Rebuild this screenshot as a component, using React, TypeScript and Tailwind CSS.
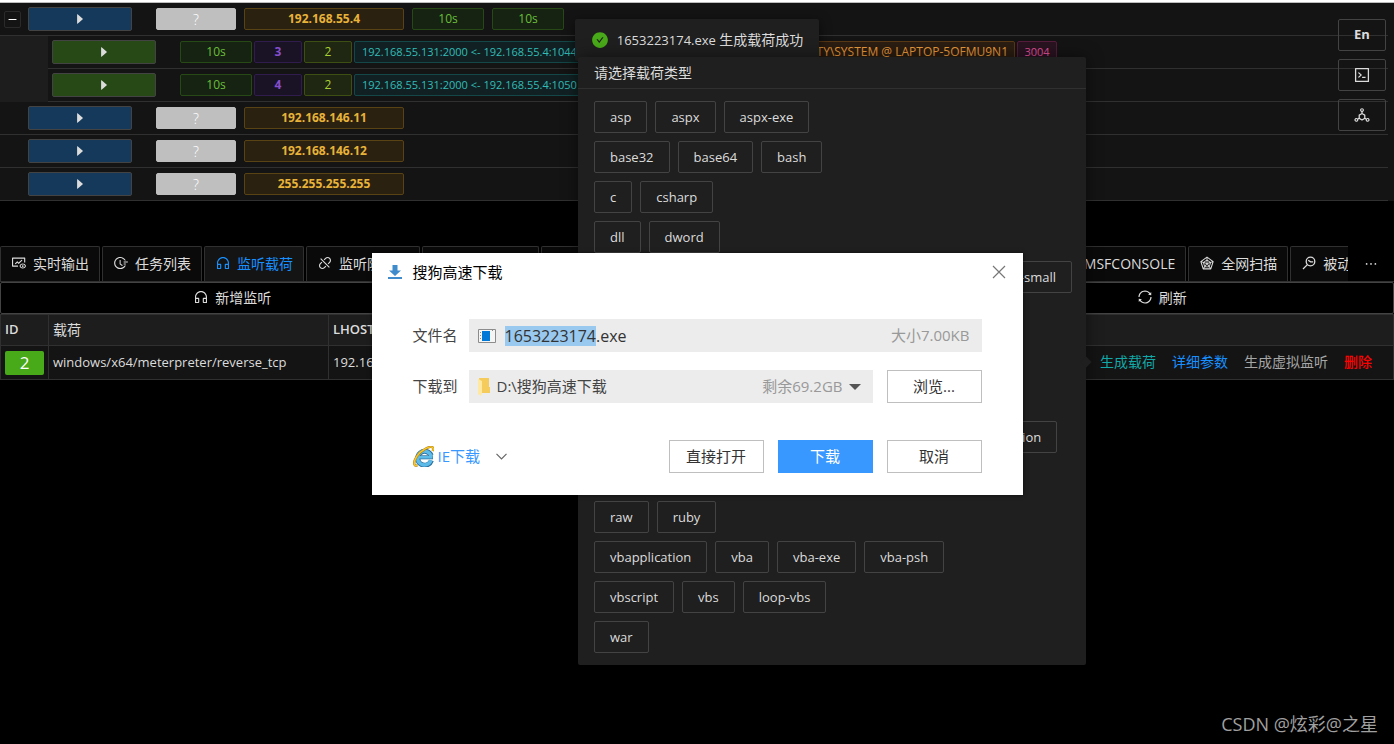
import React, { useEffect, useRef } from 'react'
import {
  AiFillCaretRight,
  AiFillCheckCircle,
  AiOutlineCode,
  AiOutlineCustomerService,
  AiOutlineDeploymentUnit,
  AiOutlineDisconnect,
  AiOutlineEllipsis,
  AiOutlineFieldTime,
  AiOutlineFundView,
  AiOutlineMinus,
  AiOutlineRadarChart,
  AiOutlineSync,
} from 'react-icons/ai'

const hosts = ['192.168.146.11', '192.168.146.12', '255.255.255.255']

const sessions = [
  { id: 3, link: '192.168.55.131:2000 <- 192.168.55.4:1044', user: 'NT AUTHORITY\\SYSTEM @ LAPTOP-5OFMU9N1', pid: '3004' },
  { id: 4, link: '192.168.55.131:2000 <- 192.168.55.4:1050', user: '', pid: '' },
]

const formats = [
  ['asp', 'aspx', 'aspx-exe'],
  ['base32', 'base64', 'bash'],
  ['c', 'csharp'],
  ['dll', 'dword'],
  ['elf', 'elf-so', 'exe', 'exe-only', 'exe-service', 'exe-small'],
  ['hex', 'hta-psh'],
  ['jar', 'java', 'jsp', 'js_be', 'js_le'],
  ['macho', 'msi', 'msi-nouac'],
  ['powershell', 'psh', 'psh-cmd', 'psh-net', 'psh-reflection'],
  ['python', 'perl'],
  ['raw', 'ruby'],
  ['vbapplication', 'vba', 'vba-exe', 'vba-psh'],
  ['vbscript', 'vbs', 'loop-vbs'],
  ['war'],
]

function ScanIcon() {
  return (
    <svg width="16" height="16" viewBox="0 0 16 16" fill="none" stroke="currentColor" strokeWidth="1.3">
      <circle cx="9.500" cy="6.500" r="4.300" />
      <path d="M6.400 9.600L2 14M7.200 5.200l2.400 1.600h2.600" />
    </svg>
  )
}

const tabs = [
  { name: '实时输出', icon: <AiOutlineFundView size={16} /> },
  { name: '任务列表', icon: <AiOutlineFieldTime size={16} /> },
  { name: '监听载荷', icon: <AiOutlineCustomerService size={16} />, active: true },
  { name: '监听防火墙', icon: <AiOutlineDisconnect size={16} /> },
  { name: 'Socks5代理', icon: <AiOutlineDeploymentUnit size={16} /> },
  { name: '文件列表', icon: <AiOutlineCode size={16} /> },
  { name: '口令凭证', icon: <AiOutlineCode size={16} /> },
  { name: '历史记录', icon: <AiOutlineCode size={16} /> },
  { name: '自动编排', icon: <AiOutlineCode size={16} /> },
  { name: '主机信息', icon: <AiOutlineCode size={16} /> },
  { name: 'MSFCONSOLE', icon: <AiOutlineCode size={16} /> },
  { name: '全网扫描', icon: <AiOutlineRadarChart size={16} /> },
  { name: '被动扫描', icon: <ScanIcon /> },
]

function Tag({ className, children }: { className: string; children: React.ReactNode }) {
  return (
    <span className={`flex h-[22px] shrink-0 items-center justify-center rounded-xs border whitespace-nowrap ${className}`}>
      {children}
    </span>
  )
}

function HostRow({ ip, children, open }: { ip: string; children?: React.ReactNode; open?: boolean }) {
  return (
    <div className="flex h-[33px] items-center border-b border-[#303030]">
      <div className="flex w-7 shrink-0 pl-1">
        {open && (
          <button aria-label="收起" className="flex h-[17px] w-[17px] items-center justify-center rounded-xs border border-[#2a2a2a] text-[11px] text-white">
            <AiOutlineMinus />
          </button>
        )}
      </div>
      <button aria-label={ip} className="mr-6 flex h-6 w-[104px] shrink-0 items-center justify-center rounded-xs border border-[#434343] bg-[#15395b] text-[14px] text-[#dcdcdc]">
        <AiFillCaretRight />
      </button>
      <Tag className="mr-2 w-20 border-[#bfbfbf] bg-[#bfbfbf] text-[14px] font-light text-white">?</Tag>
      <Tag className="w-40 border-[#594214] bg-[#2b2111] text-[12px] font-bold text-[#e8b339]">{ip}</Tag>
      {children}
    </div>
  )
}

function ExeIcon() {
  return (
    <svg width="18" height="14" viewBox="0 0 18 14">
      <path d="M.5.5h17v13H.5z" fill="#f5f5f5" stroke="#8c8c8c" />
      <path d="M4 2h8v10H4z" fill="#0078d7" />
      <path d="M2 3h1v1H2zM2 6h1v1H2zM2 9h1v1H2zM14 1h1v1h-1z" fill="#8c8c8c" />
    </svg>
  )
}

function FolderIcon() {
  return (
    <svg width="12" height="18" viewBox="0 0 12 18">
      <path d="M1 0h10v9h1v6H3z" fill="#f5cb5c" />
      <path d="M0 1l4 2v12l-1 3-3-2z" fill="#ffe9a2" />
    </svg>
  )
}

function IeIcon() {
  return (
    <svg width="21" height="21" viewBox="0 0 21 21" fill="none">
      <path d="M18.400 14.500A7 7 0 1 1 18.200 9.500" stroke="#2f6f9c" strokeWidth="5" />
      <path d="M4.500 11.300h15.500" stroke="#2f6f9c" strokeWidth="4" />
      <path d="M18 14.300A6.900 6.900 0 1 1 18.200 10.600" stroke="#5cbbe9" strokeWidth="3.400" />
      <path d="M5 11.300h14.500" stroke="#5cbbe9" strokeWidth="2.600" />
      <path d="M4.400 19.400C.6 20.600 0 16.400 3.600 10.600 7.600 4.400 17 -.6 19.600 1.400c.8.8.6 2.400 0 3.600" stroke="#a87a1c" strokeWidth="2.400" />
      <path d="M4.400 19.400C.6 20.600 0 16.400 3.600 10.600 7.600 4.400 17 -.6 19.600 1.400c.8.8.6 2.400 0 3.600" stroke="#f7c829" strokeWidth="1.500" />
    </svg>
  )
}

function DownloadDialog() {
  const nameRef = useRef<HTMLInputElement>(null)

  // preselect the file name without its extension
  useEffect(() => {
    nameRef.current?.focus()
    nameRef.current?.setSelectionRange(0, 10)
  }, [])

  const plain = 'h-[33px] w-[95px] border border-[#bfbfbf] bg-white text-[#333]'

  return (
    <div role="dialog" aria-label="搜狗高速下载" className="w-[651px] bg-white pb-[22px] text-[15px] text-[#444] shadow-[0_0_4px_rgba(0,0,0,0.6)]">
      <div className="flex h-[38px] items-center pr-[17px] pl-4">
        <svg width="14" height="14" viewBox="0 0 14 14" fill="#3f8bcc">
          <path d="M4.500 0h5v5.500H13L7 11 1 5.500h3.500zM0 12h14v2H0z" />
        </svg>
        <h2 className="ml-[11px] grow text-[15px] text-black">搜狗高速下载</h2>
        <button aria-label="关闭">
          <svg width="14" height="14" viewBox="0 0 14 14" stroke="#777" strokeWidth="1.200">
            <path d="M1 1l12 12M13 1L1 13" />
          </svg>
        </button>
      </div>
      <div className="px-[41px] pt-7">
        <div className="flex items-center">
          <label htmlFor="file" className="w-14 shrink-0">文件名</label>
          <div className="flex h-[33px] grow items-center bg-[#ececec] pr-3 pl-[9px]">
            <ExeIcon />
            <input id="file" ref={nameRef} defaultValue="1653223174.exe" className="ml-[9px] w-0 min-w-0 grow bg-transparent text-[16px] leading-5 text-[#333] outline-none selection:bg-[#99c9ef] selection:text-[#333]" />
            <span className="text-[#999]">大小7.00KB</span>
          </div>
        </div>
        <div className="mt-[18px] flex items-center">
          <label htmlFor="dir" className="w-14 shrink-0">下载到</label>
          <div className="mr-3.5 flex h-[33px] grow items-center bg-[#ececec] pr-3 pl-[9px]">
            <FolderIcon />
            <select id="dir" className="ml-[7px] grow appearance-none bg-transparent text-[#444]">
              <option>D:\搜狗高速下载</option>
            </select>
            <span className="mr-1.5 text-[#999]">剩余69.2GB</span>
            <svg width="12" height="6" viewBox="0 0 12 6" fill="#555">
              <path d="M0 0h12L6 6z" />
            </svg>
          </div>
          <button className={plain}>浏览...</button>
        </div>
        <div className="mt-[37px] flex items-center gap-3.5">
          <button className="mr-auto flex items-center text-[#3898ff]">
            <IeIcon />
            <span className="mr-4 ml-1">IE下载</span>
            <svg width="11" height="7" viewBox="0 0 11 7" fill="none" stroke="#666" strokeWidth="1.200">
              <path d="M.5.8l5 5 5-5" />
            </svg>
          </button>
          <button className={plain}>直接打开</button>
          <button className="h-[33px] w-[95px] bg-[#3898ff] text-white">下载</button>
          <button className={plain}>取消</button>
        </div>
      </div>
    </div>
  )
}

export default function App() {
  const bar = 'flex h-8 flex-1 items-center justify-center gap-1.5 rounded-xs border border-[#434343] pb-0.5 text-[14px]'
  const side = 'flex h-8 w-12 items-center justify-center rounded-xs border border-[#434343] text-[#dcdcdc]'

  return (
    <div className="relative min-h-screen overflow-hidden bg-black font-['Open_Sans','Noto_Sans_CJK_SC',sans-serif] text-[#dcdcdc]">
      <div className="h-[3px] border-b border-[#bdbdbd] bg-white" />

      {/* hosts and sessions */}
      <div className="h-[198px] bg-[#141414] pr-1.5">
        <HostRow ip="192.168.55.4" open>
          <Tag className="ml-2 w-[72px] border-[#274916] bg-[#162312] text-[12px] text-[#6abe39]">10s</Tag>
          <Tag className="ml-2 w-[72px] border-[#274916] bg-[#162312] text-[12px] text-[#6abe39]">10s</Tag>
        </HostRow>
        <div className="bg-[#1d1d1d] pl-12">
          {sessions.map((s) => (
            <div key={s.id} className="flex h-[33px] items-center border-b border-[#303030] bg-[#141414] pl-1">
              <button aria-label={`会话 ${s.id}`} className="mr-6 flex h-6 w-[104px] shrink-0 items-center justify-center rounded-xs border border-[#434343] bg-[#274916] text-[14px] text-[#dcdcdc]">
                <AiFillCaretRight />
              </button>
              <div className="flex gap-0.5">
                <Tag className="w-[72px] border-[#274916] bg-[#162312] text-[12px] text-[#6abe39]">10s</Tag>
                <Tag className="w-12 border-[#301c4d] bg-[#1a1325] text-[12px] font-bold text-[#854eca]">{s.id}</Tag>
                <Tag className="w-12 border-[#3e4f13] bg-[#1f2611] text-[12px] text-[#a9d134]">2</Tag>
                <Tag className="w-[230px] justify-start! border-[#144848] bg-[#112123] px-[7px] text-[11px] text-[#33bcb7]">{s.link}</Tag>
                {s.user && (
                  <>
                    <Tag className="w-[429px] justify-end! border-[#593815] bg-[#2b1d11] px-1.5 text-[12px] text-[#e89a3c]">{s.user}</Tag>
                    <Tag className="w-10 border-[#551c3b] bg-[#291321] text-[11px] text-[#e0529c]">{s.pid}</Tag>
                  </>
                )}
              </div>
            </div>
          ))}
        </div>
        {hosts.map((ip) => (
          <HostRow key={ip} ip={ip} />
        ))}
      </div>

      {/* tabs */}
      <div className="mt-[45px] flex border-b border-[#303030]">
        <div className="flex min-w-0 flex-1 gap-0.5 overflow-hidden">
          {tabs.map((tab) => (
            <button
              key={tab.name}
              className={`flex h-[35px] shrink-0 items-center gap-1.5 rounded-t-xs border border-b-0 border-[#303030] px-2.5 pb-0.5 text-[14px] whitespace-nowrap ${
                tab.active ? 'bg-[#141414] text-[#1890ff]' : 'bg-[#0a0a0a]'
              }`}
            >
              {tab.icon}
              {tab.name}
            </button>
          ))}
        </div>
        <button aria-label="更多" className="flex w-[46px] items-center justify-center text-[16px]">
          <AiOutlineEllipsis />
        </button>
      </div>

      <div className="flex">
        <button className={bar}><AiOutlineCustomerService size={16} />新增监听</button>
        <button className={bar}><AiOutlineCustomerService size={16} />虚拟监听</button>
        <button className={bar}><AiOutlineSync size={16} />刷新</button>
      </div>

      <table className="w-full table-fixed border border-[#303030] text-left text-[13px]">
        <thead className="bg-[#1d1d1d]">
          <tr className="h-[31px]">
            <th className="w-12 border-r border-b border-[#303030] px-1 font-semibold">ID</th>
            <th className="w-[280px] border-r border-b border-[#303030] px-1 text-[14px] leading-5 font-normal">载荷</th>
            <th className="border-b border-[#303030] px-1 font-semibold">LHOST</th>
            <th className="w-[298px] border-b border-[#303030]" />
          </tr>
        </thead>
        <tbody className="bg-[#141414]">
          <tr className="h-[34px]">
            <td className="border-r border-[#303030] px-1">
              <span className="flex h-6 items-center justify-center rounded-xs bg-[#49aa19] text-[17px] text-white">2</span>
            </td>
            <td className="border-r border-[#303030] px-1">windows/x64/meterpreter/reverse_tcp</td>
            <td className="px-1">192.168.55.131</td>
            <td>
              <div className="flex justify-end gap-4 pr-[21px] pb-0.5 text-[14px]">
                <a href="#payload" className="text-[#13a8a8]">生成载荷</a>
                <a href="#detail" className="text-[#1890ff]">详细参数</a>
                <a href="#virtual" className="text-[#a6a6a6]">生成虚拟监听</a>
                <a href="#delete" className="font-medium text-[#f00]">删除</a>
              </div>
            </td>
          </tr>
        </tbody>
      </table>

      {/* floating buttons */}
      <div className="absolute top-[19px] right-2 flex flex-col gap-2">
        <button className={side}><span className="text-[13px] font-bold">En</span></button>
        <button aria-label="终端" className={side}><AiOutlineCode size={18} /></button>
        <button aria-label="拓扑" className={side}><AiOutlineDeploymentUnit size={18} /></button>
      </div>

      {/* message */}
      <div className="absolute inset-x-0 top-[19px] flex justify-center">
        <div className="flex h-[42px] items-center rounded-xs bg-[#1f1f1f] px-4 text-[13px] shadow-[0_3px_12px_rgba(0,0,0,0.6)]">
          <AiFillCheckCircle size={18} className="mr-2 text-[#49aa19]" />
          <span>1653223174.exe <span className="text-[14px]">生成载荷成功</span></span>
        </div>
      </div>

      {/* payload type popover */}
      <div className="absolute top-[57px] right-[308px] w-[508px] rounded-xs bg-[#1f1f1f] shadow-[0_0_16px_rgba(0,0,0,0.5)]">
        <span className="absolute top-[301px] -right-1 h-2 w-2 rotate-45 bg-[#1f1f1f]" />
        <h3 className="flex h-8 items-center border-b border-[#303030] px-4 text-[14px]">请选择载荷类型</h3>
        <div className="flex flex-col gap-2 px-4 py-3">
          {formats.map((row) => (
            <div key={row[0]} className="flex gap-2">
              {row.map((f) => (
                <button key={f} className="h-8 rounded-xs border border-[#434343] px-[15px] pt-0.5 text-[13px] whitespace-nowrap">{f}</button>
              ))}
            </div>
          ))}
        </div>
      </div>

      <div className="absolute inset-x-0 top-[253px] flex justify-center">
        <DownloadDialog />
      </div>

      <p className="absolute right-4 bottom-2 text-[18px] leading-6 text-[#a0a0a0]">CSDN @炫彩@之星</p>
    </div>
  )
}
